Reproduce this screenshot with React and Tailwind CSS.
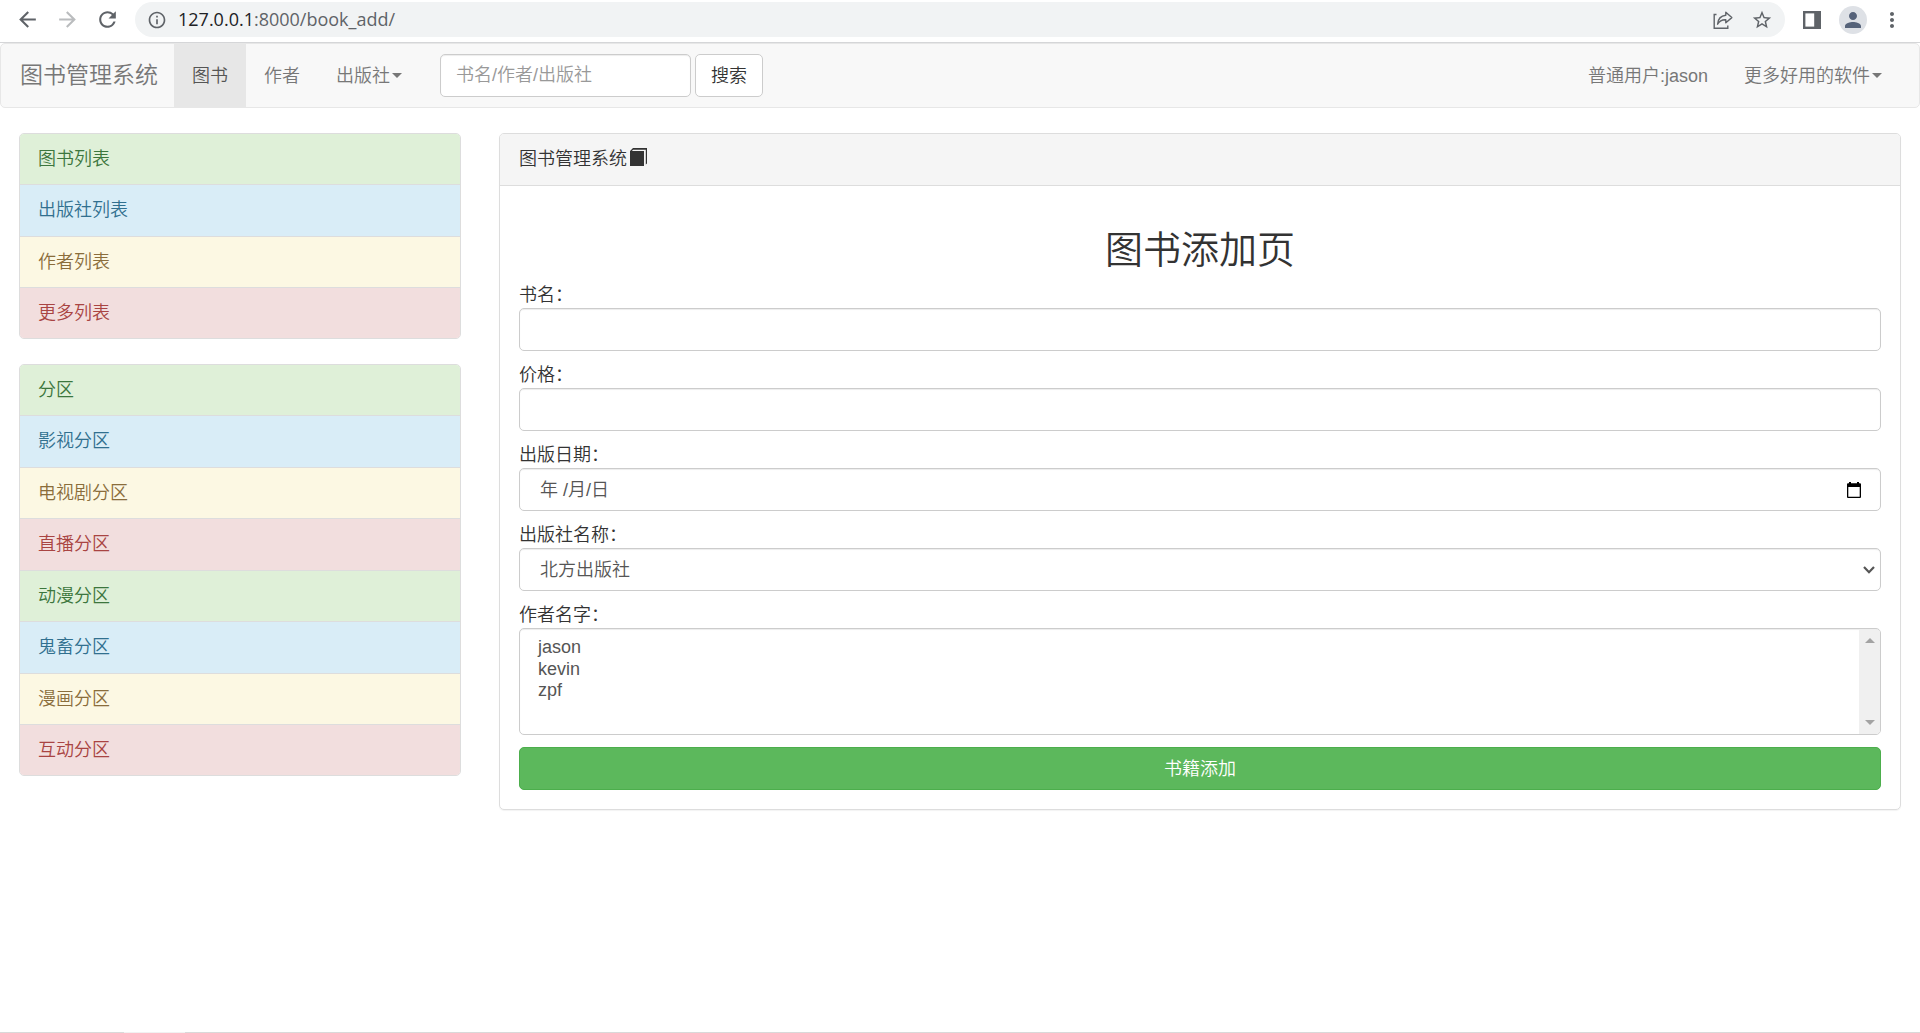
import React from 'react'
import { MdArrowBack, MdArrowForward, MdRefresh, MdInfoOutline, MdStarBorder, MdPerson, MdMoreVert } from 'react-icons/md'

const tones = {
  success: 'bg-[#dff0d8] text-[#3c763d]',
  info: 'bg-[#d9edf7] text-[#31708f]',
  warning: 'bg-[#fcf8e3] text-[#8a6d3b]',
  danger: 'bg-[#f2dede] text-[#a94442]',
}
const toneOrder = ['success', 'info', 'warning', 'danger']

const mainList = ['图书列表', '出版社列表', '作者列表', '更多列表']
const sectionList = ['分区', '影视分区', '电视剧分区', '直播分区', '动漫分区', '鬼畜分区', '漫画分区', '互动分区']

const boxClass = 'h-[43px] w-full rounded-[5px] border border-[#ccc] bg-white text-[#555] shadow-[inset_0_1px_1px_rgba(0,0,0,0.075)]'

function BrowserBar() {
  return (
    <div className="flex h-[43px] items-start border-b border-[#d5d6d8] bg-white pt-[2px] pr-4 pl-[15px] text-[#5f6368]">
      <div className="flex h-[35px] items-center gap-[15px]">
        <button type="button" aria-label="后退"><MdArrowBack size={25} /></button>
        <button type="button" aria-label="前进" className="text-[#babcbe]"><MdArrowForward size={25} /></button>
        <button type="button" aria-label="重新加载"><MdRefresh size={25} /></button>
      </div>
      <div className="ml-[15px] flex h-[35px] flex-1 items-center rounded-full bg-[#f1f3f4] pr-3 pl-3">
        <MdInfoOutline size={20} />
        <span className="ml-[11px] flex-1 pb-px font-['Open_Sans','Noto_Sans',sans-serif] text-lg leading-6 font-normal">
          <span className="text-[#202124]">127.0.0.1</span>:8000/book_add/
        </span>
        <button type="button" aria-label="分享">
          <svg width="20" height="20" viewBox="0 0 20 20" fill="none" stroke="currentColor" strokeWidth="1.4">
            <path d="M3.5 4.5H1.2V18.3H14.8V15.5" />
            <path d="M12.8 2.2L18.8 7.6L12.8 12.8V9.8C9.2 9.6 6.6 10.8 4.6 14.2C5 9.2 7.6 5.8 12.8 5.3Z" strokeLinejoin="round" />
          </svg>
        </button>
        <button type="button" aria-label="收藏" className="ml-[18px]"><MdStarBorder size={22} /></button>
      </div>
      <div className="ml-[18px] flex h-[35px] items-center">
        <button type="button" aria-label="侧边栏">
          <svg width="18" height="18" viewBox="0 0 18 18">
            <rect width="18" height="18" fill="currentColor" />
            <rect x="2.4" y="2.4" width="8.8" height="13.2" fill="#fff" />
          </svg>
        </button>
        <button type="button" aria-label="账户" className="ml-[18px] flex h-7 w-7 items-center justify-center rounded-full bg-[#dee1e6] text-[#56637a]">
          <MdPerson size={24} />
        </button>
        <button type="button" aria-label="更多" className="ml-[13px]"><MdMoreVert size={24} /></button>
      </div>
    </div>
  )
}

function Caret() {
  return <span className="ml-0.5 inline-block border-x-5 border-t-5 border-x-transparent border-t-current align-middle" />
}

function Navbar() {
  return (
    <nav className="flex h-[65px] items-stretch rounded-[5px] border border-[#e7e7e7] bg-[#f8f8f8] text-[#777]">
      <a href="#" className="flex items-center pr-4 pl-[19px] text-[23px]">图书管理系统</a>
      <ul className="flex items-stretch">
        <li className="flex"><a href="#" className="flex items-center bg-[#e7e7e7] px-[18px] text-[#555]">图书</a></li>
        <li className="flex"><a href="#" className="flex items-center px-[18px]">作者</a></li>
        <li className="flex"><a href="#" className="flex items-center px-[18px]">出版社<Caret /></a></li>
      </ul>
      <form className="ml-5 flex items-center gap-1" onSubmit={(e) => e.preventDefault()}>
        <div className="w-[251px]">
          <input type="text" aria-label="搜索" placeholder="书名/作者/出版社" className={`${boxClass} px-[15px] placeholder:text-[#999]`} />
        </div>
        <button type="submit" className="h-[43px] rounded-[5px] border border-[#ccc] bg-white px-[15px] text-[#333]">搜索</button>
      </form>
      <ul className="ml-auto flex items-stretch pr-[19px]">
        <li className="flex"><a href="#" className="flex items-center px-[18px]">普通用户:jason</a></li>
        <li className="flex"><a href="#" className="flex items-center px-[18px]">更多好用的软件<Caret /></a></li>
      </ul>
    </nav>
  )
}

function ListGroup({ items }) {
  return (
    <ul className="mb-[25px] overflow-hidden rounded-[5px] border border-[#ddd]">
      {items.map((item, i) => (
        <li key={item} className={`border-b border-[#ddd] px-[18px] py-[13px] leading-6 last:border-b-0 not-last:even:pb-[14px] ${tones[toneOrder[i % 4]]}`}>
          <a href="#">{item}</a>
        </li>
      ))}
    </ul>
  )
}

function Field({ id, label, children }) {
  return (
    <div className="mb-3">
      <label htmlFor={id} className="block h-[25px] leading-6">{label}</label>
      {children}
    </div>
  )
}

function BookForm() {
  return (
    <form onSubmit={(e) => e.preventDefault()}>
      <Field id="title" label="书名：">
        <input id="title" type="text" className={`${boxClass} block px-4`} />
      </Field>
      <Field id="price" label="价格：">
        <input id="price" type="text" className={`${boxClass} block px-4`} />
      </Field>
      <Field id="publish_date" label="出版日期：">
        <div className={`${boxClass} flex items-center pr-[18px] pl-5`}>
          <input id="publish_date" type="text" placeholder="年 /月/日" className="flex-1 outline-none placeholder:text-[#555]" />
          <button type="button" aria-label="选择日期">
            <svg width="16" height="18" viewBox="0 0 16 18" className="text-black">
              <path fill="currentColor" fillRule="evenodd" d="M3 1H5V2.2H11V1H13V2.2H14Q15 2.2 15 3.2V16Q15 17 14 17H2Q1 17 1 16V3.2Q1 2.2 2 2.2H3ZM2.3 6V15.7H13.7V6Z" />
            </svg>
          </button>
        </div>
      </Field>
      <Field id="publish" label="出版社名称：">
        <div className="grid items-center">
          <select id="publish" className={`${boxClass} col-start-1 row-start-1 appearance-none px-5`}>
            <option>北方出版社</option>
          </select>
          <svg width="12" height="8" viewBox="0 0 12 8" fill="none" stroke="#555" strokeWidth="2.2" className="pointer-events-none col-start-1 row-start-1 mr-1.5 justify-self-end">
            <path d="M1 1L6 6.2L11 1" />
          </svg>
        </div>
      </Field>
      <Field id="authors" label="作者名字：">
        <div className="flex h-[107px] overflow-hidden rounded-[5px] border border-[#ccc] shadow-[inset_0_1px_1px_rgba(0,0,0,0.075)]">
          <select id="authors" multiple size={4} className="flex-1 overflow-hidden px-4 py-2 text-[#555] outline-none">
            <option className="p-0 px-0.5 leading-[22px]">jason</option>
            <option className="p-0 px-0.5 leading-[22px]">kevin</option>
            <option className="p-0 px-0.5 leading-[22px]">zpf</option>
          </select>
          <div className="mt-px flex w-[21px] flex-col items-center justify-between bg-[#f0f0f0] pt-2 pb-[9px] text-[#a3a3a3]">
            <svg width="10" height="5" viewBox="0 0 10 5"><path fill="currentColor" d="M5 0L10 5H0Z" /></svg>
            <svg width="10" height="5" viewBox="0 0 10 5"><path fill="currentColor" d="M0 0H10L5 5Z" /></svg>
          </div>
        </div>
      </Field>
      <button type="submit" className="block h-[43px] w-full rounded-[5px] border border-[#4cae4c] bg-[#5cb85c] text-white">书籍添加</button>
    </form>
  )
}

export default function App() {
  return (
    <div lang="zh-CN" className="flex min-h-screen flex-col bg-white font-['Liberation_Sans','Noto_Sans_CJK_SC',sans-serif] text-lg font-[350] text-[#333]">
      <BrowserBar />
      <Navbar />
      <main className="mt-[25px] grid flex-1 grid-cols-4 items-start">
        <aside className="px-[19px]">
          <ListGroup items={mainList} />
          <ListGroup items={sectionList} />
        </aside>
        <div className="col-span-3 px-[19px]">
          <section className="rounded-[5px] border border-[#ddd] shadow-[0_1px_1px_rgba(0,0,0,0.05)]">
            <div className="flex items-center gap-[3px] rounded-t border-b border-[#ddd] bg-[#f5f5f5] px-[19px] pt-[13px] pb-[14px] leading-6">
              图书管理系统
              <svg width="17" height="18" viewBox="0 0 17 18" className="-mt-1">
                <path fill="currentColor" d="M0 3L3 0H17V15.5L15.8 16.5V1.8H3.2L1.8 3H14V18H0Z" />
              </svg>
            </div>
            <div className="p-[19px]">
              <h2 className="mt-6 mb-3 text-center text-[38px] leading-[42px]">图书添加页</h2>
              <BookForm />
            </div>
          </section>
        </div>
      </main>
      <div className="h-px bg-[#d9d9d9]">
        <div className="ml-[124px] h-px w-[61px] bg-[#f1f1f1]" />
      </div>
    </div>
  )
}
